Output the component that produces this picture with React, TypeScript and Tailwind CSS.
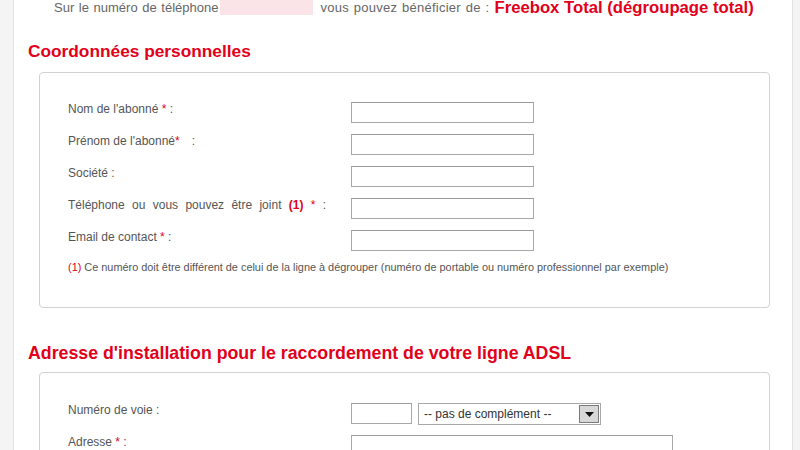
import React from "react";

const Req = () => <span className="text-[#e2001a]">*</span>;

function Row({ label, children }: { label: React.ReactNode; children?: React.ReactNode }) {
  return (
    <div className="flex items-start h-[32px]">
      <div className="w-[283px] leading-[16px] text-[12px] text-[#555]">{label}</div>
      <div className="flex items-start gap-[6px] mt-[1px]">{children}</div>
    </div>
  );
}

const Input = ({ w }: { w: string }) => (
  <div className={`${w} h-[21px] border border-[#a8a8a8] border-t-[#9a9a9a] bg-white`} />
);

export default function App() {
  return (
    <div
      className="w-[800px] h-[450px] overflow-hidden flex bg-[#f4f4f4]"
      style={{ fontFamily: '"Liberation Sans", Arial, sans-serif' }}
    >
      <div className="w-[13px] shrink-0" />
      <div className="w-[780px] shrink-0 bg-white border-l border-r border-[#e3e3e3] pl-[14px]">
        <div className="h-[16px] flex items-center text-[13px] text-[#666] pl-[26px] leading-[16px]">
          <span className="[word-spacing:1px]">Sur le numéro de téléphone</span>
          <span className="inline-block w-[93px] h-[15px] bg-[#fbe4e7] ml-[2px] mr-[7px] self-start" />
          <span className="[word-spacing:1px] tracking-[0.25px]">vous pouvez bénéficier de :</span>
          <span className="ml-[5px] text-[16.7px] font-bold text-[#e2001a]">Freebox Total (dégroupage total)</span>
        </div>

        <h2 className="mt-[25px] h-[20px] leading-[20px] text-[17.3px] font-bold text-[#e2001a]">
          Coordonnées personnelles
        </h2>
        <div className="mt-[11px] ml-[11px] w-[731px] h-[236px] border border-[#d2d2d2] rounded-[4px] pl-[28px] pt-[28px]">
          <Row label={<>Nom de l'abonné <Req /> :</>}>
            <Input w="w-[183px]" />
          </Row>
          <Row label={<>Prénom de l'abonné<Req /><span className="ml-[12px]">:</span></>}>
            <Input w="w-[183px]" />
          </Row>
          <Row label={<>Société :</>}>
            <Input w="w-[183px]" />
          </Row>
          <Row label={<span className="[word-spacing:4px]">Téléphone ou vous pouvez être joint <span className="text-[#e2001a] font-bold">(1)</span> <Req /> :</span>}>
            <Input w="w-[183px]" />
          </Row>
          <Row label={<>Email de contact <Req /> :</>}>
            <Input w="w-[183px]" />
          </Row>
          <p className="text-[10.9px] leading-[14px] text-[#555] -mt-[1px]">
            <span className="text-[#e2001a]">(1)</span> Ce numéro doit être différent de celui de la ligne à dégrouper (numéro de portable ou numéro professionnel par exemple)
          </p>
        </div>

        <h2 className="mt-[35px] h-[20px] leading-[20px] text-[17.75px] font-bold text-[#e2001a]">
          Adresse d'installation pour le raccordement de votre ligne ADSL
        </h2>
        <div className="mt-[9px] ml-[11px] w-[731px] h-[120px] border border-[#d2d2d2] rounded-[4px] pl-[28px] pt-[29px]">
          <Row label={<>Numéro de voie :</>}>
            <Input w="w-[61px]" />
            <div className="w-[183px] h-[22px] border border-[#a8a8a8] bg-white flex items-center justify-between pl-[5px] pr-[1px]">
              <span className="text-[12px] text-[#333]">-- pas de complément --</span>
              <div className="w-[20px] h-[18px] border border-[#7b7b7b] bg-[#d8d8d8] flex items-center justify-center">
                <svg width="9" height="6" viewBox="0 0 9 6">
                  <path d="M0 1 L9 1 L4.5 6 Z" fill="#111" />
                </svg>
              </div>
            </div>
          </Row>
          <Row label={<>Adresse <Req /> :</>}>
            <Input w="w-[322px]" />
          </Row>
        </div>
      </div>
    </div>
  );
}
